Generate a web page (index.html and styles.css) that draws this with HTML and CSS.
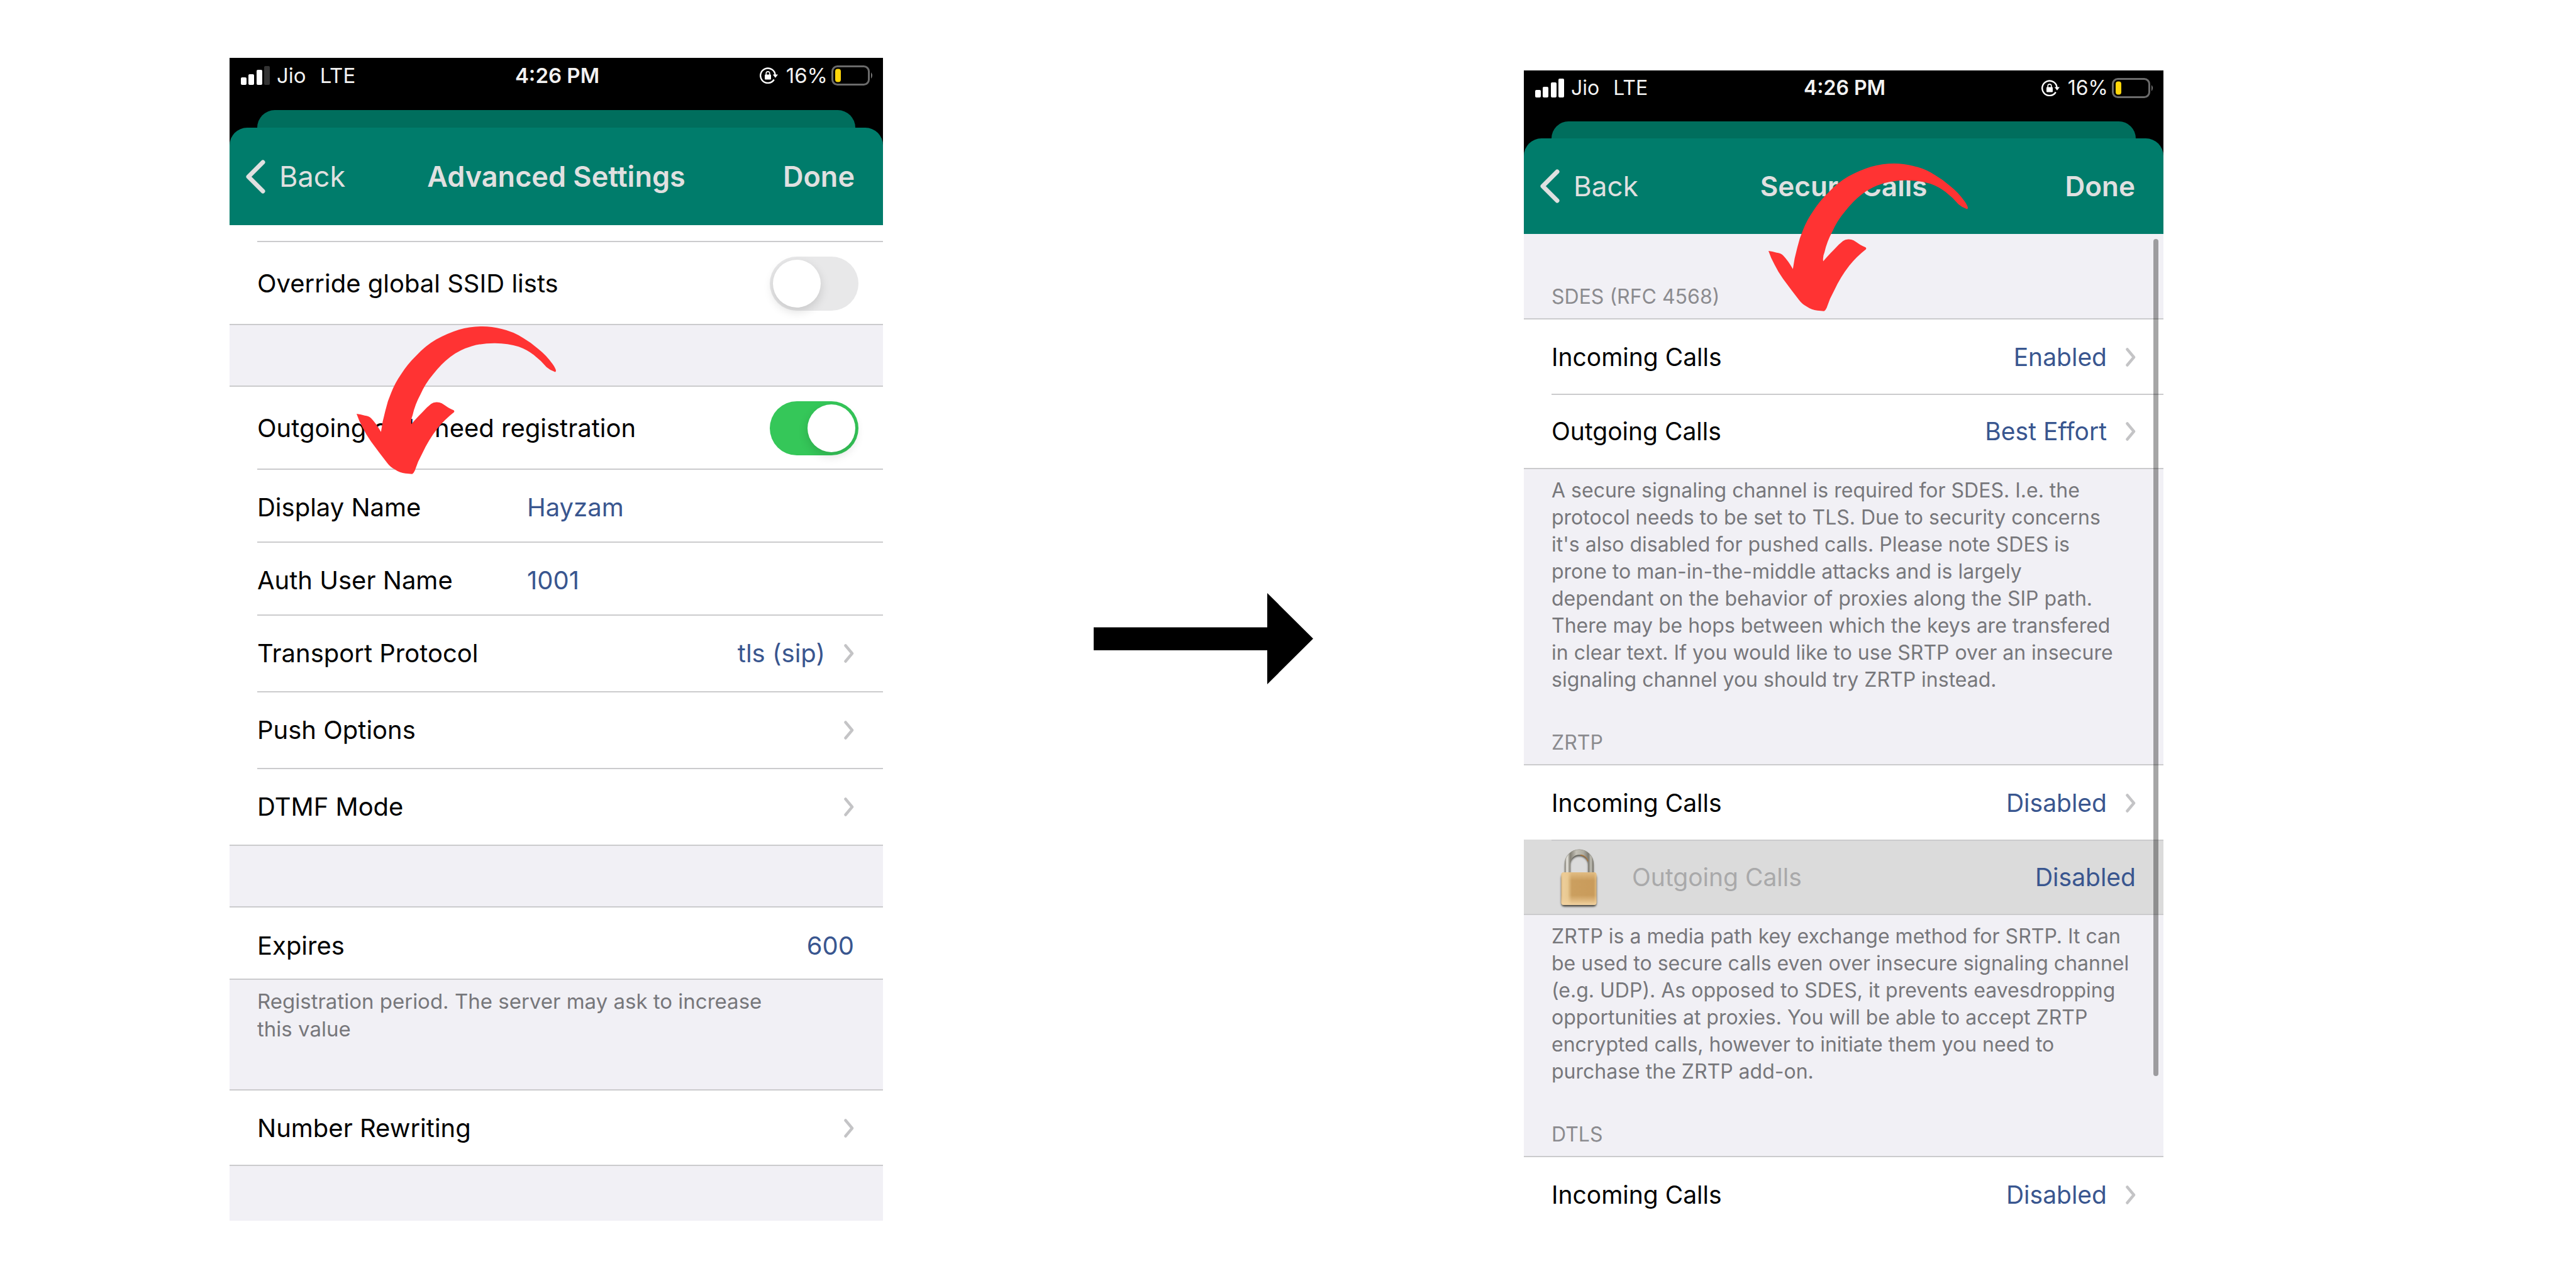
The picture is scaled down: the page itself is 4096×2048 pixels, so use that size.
FILE: index.html
```
<!DOCTYPE html>
<html lang="en">
<head>
<meta charset="utf-8">
<title>Secure call settings</title>
<link rel="stylesheet" href="styles.css">
</head>
<body>
<svg class="defs" aria-hidden="true">
  <defs>
    <symbol id="chevron" viewBox="0 0 16 30"><path d="M2.500 2.500 13 15 2.500 27.500" fill="none" stroke="#c4c4c6" stroke-width="4.500" stroke-linecap="round" stroke-linejoin="round"/></symbol>
    <symbol id="back" viewBox="0 0 32 54"><path d="M28 4 5 27 28 50" fill="none" stroke="#e0e0e0" stroke-width="7" stroke-linecap="round" stroke-linejoin="round"/></symbol>
    <symbol id="rotation" viewBox="0 0 30 26">
      <path d="M24.600 12.500A11.700 11.700 0 1 0 22.800 19.500" fill="none" stroke="#fff" stroke-width="2.400"/>
      <path d="M20.800 11.500H29L24.900 16.800Z" fill="#fff"/>
      <rect x="8" y="11.600" width="10" height="8" rx="1" fill="#fff"/>
      <path d="M10.200 12V9.700a2.800 2.800 0 0 1 5.600 0V12" fill="none" stroke="#fff" stroke-width="1.600"/>
    </symbol>
    <symbol id="battery" viewBox="0 0 68 32">
      <rect x="2.500" y="1.500" width="58" height="29" rx="8" fill="none" stroke="#6b6b6b" stroke-width="3"/>
      <path d="M64 11q4 5 0 10z" fill="#7b7b7b"/>
      <rect x="7" y="5.500" width="9" height="21" rx="4" fill="#ffd60a"/>
    </symbol>
    <symbol id="curve" viewBox="0 0 317 235">
      <path fill="#ff3333" d="M315.700 72.500Q317 72 317 70Q316 66 311.600 59.800Q302 46 288.500 35.400Q278 26 264.600 18.200Q249 8 230.600 3.900Q215 0 200 0Q181 0 162.600 5.200Q144 11 126.500 20.800Q109 31 94.600 46.800Q81 60 70.800 76Q61 90 55.100 105.300Q49 119 45.600 134.600Q41 151 38.800 167.700Q31 154 23.100 145.900Q19 142 12.900 141.700Q6 140 0 139.100Q4 151 9.500 160.600Q15 172 23.100 183.300Q36 201 49 217.400Q53 223 60.500 227.200Q69 233 77.600 233.700L88.400 234.700Q91 233 92.500 229.500Q97 215 104.800 201.200Q114 181 128.600 162.200Q140 148 155.100 136.200Q156 134 153.700 133Q149 131 145.600 129Q140 125 135.400 122.200Q132 120.500 127.200 120.600Q122 120.500 118.400 123.200Q111 129 104.800 136.200Q94 147 87 155.500Q86 148 89.100 141Q93 124 101.400 108.600Q109 91 121.800 76Q134 60 149 48.400Q164 37 183 31.500Q200 26.500 220.400 26.700Q241 27 257.800 32.200Q271 37 281.600 45.200Q293 54 302 64.700Q308 70 315.700 72.500Z"/>
    </symbol>
    <linearGradient id="brass" x1="0" x2="1"><stop offset="0" stop-color="#e3bd82"/><stop offset=".06" stop-color="#eccd9a"/><stop offset=".18" stop-color="#e8c891"/><stop offset=".3" stop-color="#cb9f5f"/><stop offset=".92" stop-color="#c99b5b"/><stop offset="1" stop-color="#e0b97c"/></linearGradient>
    <linearGradient id="sheen" x1="0" y1="0" x2="0" y2="1"><stop offset="0" stop-color="#ecca94" stop-opacity=".7"/><stop offset=".25" stop-color="#ecca94" stop-opacity="0"/><stop offset=".7" stop-color="#ecca94" stop-opacity="0"/><stop offset="1" stop-color="#f2d3a2"/></linearGradient>
    <linearGradient id="steel" gradientUnits="userSpaceOnUse" x1="21" y1="0" x2="67" y2="0"><stop offset="0" stop-color="#7b786e"/><stop offset=".08" stop-color="#edebe4"/><stop offset=".19" stop-color="#827f74"/><stop offset=".4" stop-color="#c4c2b8"/><stop offset=".65" stop-color="#aeaba0"/><stop offset=".82" stop-color="#7d7a70"/><stop offset=".91" stop-color="#c4c2b8"/><stop offset="1" stop-color="#66635a"/></linearGradient>
    <filter id="soft" x="-20%" y="-20%" width="140%" height="140%"><feGaussianBlur stdDeviation="1.800"/></filter>
  </defs>
</svg>

<main class="stage">
  <section class="phone phone-advanced" aria-label="Advanced Settings">
    <header class="top">
      <div class="status">
        <div class="carrier">
          <svg class="signal" viewBox="0 0 46 30" aria-hidden="true"><g fill="#fff"><rect y="18" width="9" height="12" rx="2"/><rect x="12" y="13" width="9" height="17" rx="2"/><rect x="25" y="6" width="9" height="24" rx="2"/></g><rect x="37" y="0" width="9" height="30" rx="2" fill="#333"/></svg>
          <span>Jio</span><span class="network">LTE</span>
        </div>
        <span class="clock">4:26 PM</span>
        <div class="power">
          <svg class="rotation" aria-hidden="true"><use href="#rotation"/></svg>
          <span>16%</span>
          <svg class="battery" aria-hidden="true"><use href="#battery"/></svg>
        </div>
      </div>
      <div class="sheet-behind"></div>
      <nav class="bar">
        <button class="back"><svg aria-hidden="true"><use href="#back"/></svg>Back</button>
        <h1>Advanced Settings</h1>
        <button class="done">Done</button>
      </nav>
    </header>

    <div class="group group-continued">
      <label class="row row-switch">Override global SSID lists<input class="switch" type="checkbox"></label>
    </div>
    <div class="space"></div>
    <div class="group">
      <label class="row row-switch">Outgoing calls need registration<input class="switch" type="checkbox" checked></label>
      <label class="row row-field"><span>Display Name</span><input class="field" type="text" value="Hayzam"></label>
      <label class="row row-field"><span>Auth User Name</span><input class="field" type="text" value="1001"></label>
      <button class="row">Transport Protocol<span class="value">tls (sip)</span><svg class="chevron" aria-hidden="true"><use href="#chevron"/></svg></button>
      <button class="row">Push Options<svg class="chevron" aria-hidden="true"><use href="#chevron"/></svg></button>
      <button class="row">DTMF Mode<svg class="chevron" aria-hidden="true"><use href="#chevron"/></svg></button>
    </div>
    <div class="space"></div>
    <div class="group group-single">
      <label class="row row-field"><span>Expires</span><input class="field field-end" type="text" value="600"></label>
    </div>
    <div class="space space-note">
      <p>Registration period. The server may ask to increase<br>this value</p>
    </div>
    <div class="group group-single">
      <button class="row">Number Rewriting<svg class="chevron" aria-hidden="true"><use href="#chevron"/></svg></button>
    </div>
    <div class="space space-last"></div>
    <svg class="pointer" aria-hidden="true"><use href="#curve"/></svg>
  </section>

  <svg class="next" viewBox="0 0 349 145" role="img" aria-label="then"><path d="M0 54.500H276V0L349 72.500 276 145V91H0Z"/></svg>

  <section class="phone phone-secure" aria-label="Secure Calls">
    <header class="top">
      <div class="status">
        <div class="carrier">
          <svg class="signal" viewBox="0 0 46 30" aria-hidden="true"><g fill="#fff"><rect y="18" width="9" height="12" rx="2"/><rect x="12" y="13" width="9" height="17" rx="2"/><rect x="25" y="6" width="9" height="24" rx="2"/><rect x="37" y="0" width="9" height="30" rx="2"/></g></svg>
          <span>Jio</span><span class="network">LTE</span>
        </div>
        <span class="clock">4:26 PM</span>
        <div class="power">
          <svg class="rotation" aria-hidden="true"><use href="#rotation"/></svg>
          <span>16%</span>
          <svg class="battery" aria-hidden="true"><use href="#battery"/></svg>
        </div>
      </div>
      <div class="sheet-behind"></div>
      <nav class="bar">
        <button class="back"><svg aria-hidden="true"><use href="#back"/></svg>Back</button>
        <h1>Secure Calls</h1>
        <button class="done">Done</button>
      </nav>
    </header>

    <div class="space space-title"><h2>SDES (RFC 4568)</h2></div>
    <div class="group">
      <button class="row">Incoming Calls<span class="value">Enabled</span><svg class="chevron" aria-hidden="true"><use href="#chevron"/></svg></button>
      <button class="row">Outgoing Calls<span class="value">Best Effort</span><svg class="chevron" aria-hidden="true"><use href="#chevron"/></svg></button>
    </div>
    <div class="space space-text">
      <p>A secure signaling channel is required for SDES. I.e. the<br>protocol needs to be set to TLS. Due to security concerns<br>it's also disabled for pushed calls. Please note SDES is<br>prone to man-in-the-middle attacks and is largely<br>dependant on the behavior of proxies along the SIP path.<br>There may be hops between which the keys are transfered<br>in clear text. If you would like to use SRTP over an insecure<br>signaling channel you should try ZRTP instead.</p>
      <h2>ZRTP</h2>
    </div>
    <div class="group">
      <button class="row">Incoming Calls<span class="value">Disabled</span><svg class="chevron" aria-hidden="true"><use href="#chevron"/></svg></button>
      <button class="row row-locked">
        <svg class="lock" viewBox="0 0 88 100" aria-hidden="true">
          <g filter="url(#soft)" fill="none" stroke="#4a4842">
            <path d="M25.500 50V31a18.500 18.500 0 0 1 37 0V50" stroke-width="8"/>
            <rect x="16" y="46" width="55" height="50" rx="4" fill="#3f3d38" stroke-width="1"/>
          </g>
          <path d="M25.500 46V28.500a18.500 18.500 0 0 1 37 0V46" fill="none" stroke="#8a877c" stroke-width="9"/>
          <path d="M25.500 46V28.500a18.500 18.500 0 0 1 37 0V46" fill="none" stroke="url(#steel)" stroke-width="8"/>
          <path d="M46 14.500a14 14 0 0 1 12 10" fill="none" stroke="#a8743a" stroke-width="1.500"/>
          <rect x="15.500" y="42" width="56" height="52" rx="4" fill="url(#brass)"/>
          <rect x="15.500" y="42" width="56" height="52" rx="4" fill="url(#sheen)"/>
        </svg>
        Outgoing Calls<span class="value">Disabled</span>
      </button>
    </div>
    <div class="space space-text">
      <p>ZRTP is a media path key exchange method for SRTP. It can<br>be used to secure calls even over insecure signaling channel<br>(e.g. UDP). As opposed to SDES, it prevents eavesdropping<br>opportunities at proxies. You will be able to accept ZRTP<br>encrypted calls, however to initiate them you need to<br>purchase the ZRTP add-on.</p>
      <h2>DTLS</h2>
    </div>
    <div class="group group-cut">
      <button class="row">Incoming Calls<span class="value">Disabled</span><svg class="chevron" aria-hidden="true"><use href="#chevron"/></svg></button>
    </div>
    <div class="scrollbar"></div>
    <svg class="pointer" aria-hidden="true"><use href="#curve"/></svg>
  </section>
</main>
</body>
</html>
```
FILE: styles.css
```
* { box-sizing: border-box; }

body {
  margin: 0;
  background: #fff;
  font-family: Inter, "Liberation Sans", sans-serif;
  color: #000;
}

h1, h2, p { margin: 0; }

button, input {
  margin: 0;
  padding: 0;
  border: 0;
  background: none;
  color: inherit;
  font: inherit;
}

.defs {
  position: absolute;
  width: 0;
  height: 0;
}

.stage {
  display: grid;
  grid-template-columns: minmax(0, 365fr) minmax(0, 1039fr) minmax(0, 1019fr) minmax(0, 1017fr) minmax(0, 656fr);
  align-items: start;
  min-height: 100vh;
  padding-top: 92px;
}

.phone-advanced { grid-column: 2; }

.next {
  justify-self: center;
  width: 349px;
  height: 145px;
  margin-top: 851px;
}

.phone {
  --body: 40px;
  --line: 60px;
  --title: 45px;
  --status: 33px;
  --note: 33px;
  --note-line: 44px;
  --edge: 46px;
  position: relative;
  font-size: var(--body);
  line-height: var(--line);
}

.phone-secure {
  --body: 39px;
  --title: 44px;
  --status: 32px;
  --note: 32px;
  --note-line: 43px;
  --edge: 44px;
  margin-top: 20px;
}

/* Status bar and navigation */

.top { background: #000; }

.status {
  display: grid;
  grid-template-columns: 1fr auto 1fr;
  align-items: center;
  height: 54px;
  padding: 2px 15px 0 18px;
  font-size: var(--status);
  line-height: 40px;
  color: #f2f2f2;
}

.carrier, .power {
  display: flex;
  align-items: center;
}

.power { justify-content: flex-end; }

.signal {
  width: 46px;
  height: 30px;
  margin-right: 11px;
}

.network { margin-left: 22px; }

.clock { font-weight: 600; }

.rotation {
  width: 30px;
  height: 26px;
  margin-right: 12px;
}

.battery {
  width: 68px;
  height: 32px;
  margin-left: 5px;
}

.sheet-behind {
  height: 28px;
  margin: 29px 44px 0;
  border-radius: 28px 28px 0 0;
  background: #006e5d;
}

.phone-secure .sheet-behind {
  height: 27px;
  margin-top: 27px;
}

.bar {
  display: grid;
  grid-template-columns: 1fr auto 1fr;
  align-items: center;
  height: 155px;
  padding: 0 25px;
  border-radius: 28px 28px 0 0;
  background: #007c6b;
  color: #e0e0e0;
  font-size: var(--title);
}

.phone-secure .bar { height: 152px; }

.bar h1 {
  font-size: var(--title);
  font-weight: 600;
}

.back {
  display: flex;
  align-items: center;
  gap: 22px;
}

.back svg {
  width: 32px;
  height: 54px;
}

.done {
  justify-self: end;
  margin-right: 20px;
  font-weight: 600;
}

/* Grouped rows */

.group {
  border-top: 2px solid #cbcbcd;
  border-bottom: 2px solid #cbcbcd;
  background: #fff;
}

.group-continued {
  padding-top: 25px;
  border-top: 0;
}

.group-cut { border-bottom: 0; }

.row {
  display: flex;
  align-items: center;
  width: 100%;
  height: 122px;
  padding: 2px var(--edge) 0 44px;
  text-align: left;
}

.row + .row, .group-continued .row {
  background: linear-gradient(#cbcbcd, #cbcbcd) 44px 0 / 100% 2px no-repeat;
}

.row-switch {
  height: 130px;
  padding-right: 39px;
}

.group-continued .row {
  height: 132px;
  padding-top: 4px;
}

.row-field {
  height: 116px;
  padding-top: 8px;
}

.group-single .row { height: 118px; }

.group-single .row-field { height: 113px; }

.phone-secure .row { height: 118px; }

.phone-secure .row-locked {
  color: #a9a9aa;
  background-color: #dbdbdb;
}

.value {
  margin-left: auto;
  color: #39568f;
}

.chevron {
  width: 16px;
  height: 30px;
  margin-left: auto;
}

.value + .chevron { margin-left: 30px; }

.row-field span { width: 429px; }

.field {
  flex: 1;
  width: 0;
  min-width: 0;
  color: #39568f;
  outline: 0;
}

.field-end { text-align: right; }

.switch {
  appearance: none;
  display: flex;
  align-items: center;
  width: 141px;
  height: 86px;
  margin-left: auto;
  padding: 0 5px;
  border-radius: 43px;
  background: #e8e8e9;
}

.switch::before {
  content: "";
  width: 76px;
  height: 76px;
  border-radius: 50%;
  background: #fff;
  box-shadow: 0 6px 16px rgba(0, 0, 0, .14);
}

.switch:checked {
  justify-content: flex-end;
  background: #35c759;
}

.lock {
  width: 88px;
  height: 100px;
  margin-right: 40px;
}

/* Space between groups, with its notes and titles */

.space {
  min-height: 96px;
  padding: 0 44px;
  background: #f1f0f5;
  color: #77777b;
  font-size: var(--note);
  line-height: var(--note-line);
  white-space: nowrap;
}

.space-note {
  height: 174px;
  padding-top: 12px;
}

.space-last { min-height: 87px; }

.space-title {
  display: flex;
  align-items: flex-end;
  height: 134px;
  padding-bottom: 13px;
}

.space-text {
  display: flex;
  flex-direction: column;
  gap: 57px;
  padding-top: 12px;
  padding-bottom: 13px;
}

.space h2 {
  color: #8b8b8f;
  font-size: var(--note);
  font-weight: 400;
}

/* Overlays */

.scrollbar {
  position: absolute;
  top: 268px;
  right: 8px;
  width: 8px;
  height: 1331px;
  border-radius: 4px;
  background: rgba(0, 0, 0, .35);
}

.pointer {
  position: absolute;
  width: 317px;
  height: 235px;
}

.phone-advanced .pointer {
  top: 427px;
  left: 202px;
}

.phone-secure .pointer {
  top: 148px;
  left: 389px;
}
```
